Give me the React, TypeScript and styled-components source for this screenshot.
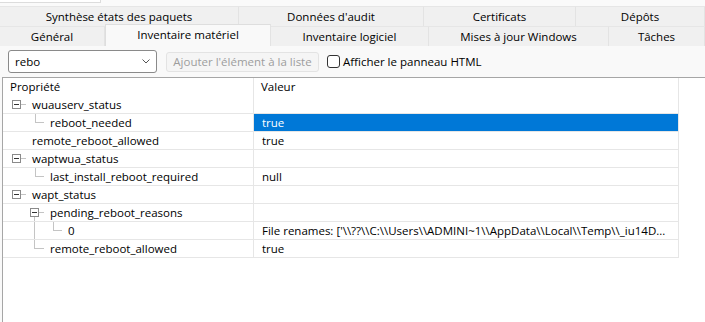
import React from "react";
import styled, { createGlobalStyle } from "styled-components";

const font = `"Open Sans", "Noto Sans", sans-serif`;
const line = "#e6e6e6";
const treeLine = "#c4c4c4";

const GlobalStyle = createGlobalStyle`
  html, body {
    margin: 0;
    padding: 0;
    background: #f9f9f9;
  }
  body {
    font-family: ${font};
    font-size: 11.5px;
    color: #000;
    width: 705px;
    height: 322px;
    overflow: hidden;
  }
`;

const topTabs = [
  { label: "Synthèse états des paquets", width: 239 },
  { label: "Données d'audit", width: 185 },
  { label: "Certificats", width: 152 },
  { label: "Dépôts", width: 129 }
];

const bottomTabs = [
  { label: "Général", width: 105 },
  { label: "Inventaire matériel", width: 166, active: true },
  { label: "Inventaire logiciel", width: 158 },
  { label: "Mises à jour Windows", width: 180 },
  { label: "Tâches", width: 96 }
];

type Glyph = "box" | "child" | "subbox" | "zero" | "last" | "none";

const rows: {
  name: string;
  value?: string;
  indent: number;
  glyph: Glyph;
  selected?: boolean;
}[] = [
  { name: "wuauserv_status", indent: 29, glyph: "box" },
  { name: "reboot_needed", value: "true", indent: 47, glyph: "child", selected: true },
  { name: "remote_reboot_allowed", value: "true", indent: 29, glyph: "none" },
  { name: "waptwua_status", indent: 29, glyph: "box" },
  { name: "last_install_reboot_required", value: "null", indent: 47, glyph: "child" },
  { name: "wapt_status", indent: 29, glyph: "box" },
  { name: "pending_reboot_reasons", indent: 47, glyph: "subbox" },
  {
    name: "0",
    value: "File renames: ['\\\\??\\\\C:\\\\Users\\\\ADMINI~1\\\\AppData\\\\Local\\\\Temp\\\\_iu14D...",
    indent: 65,
    glyph: "zero"
  },
  { name: "remote_reboot_allowed", value: "true", indent: 47, glyph: "last" }
];

function Minus({ x }: { x: number }) {
  return (
    <g>
      <rect x={x + 0.5} y={4.5} width={8} height={8} fill="#fff" stroke="#8a8a8a" />
      <line x1={x + 2} y1={8.5} x2={x + 7} y2={8.5} stroke="#333" />
    </g>
  );
}

function TreeGlyph({ glyph }: { glyph: Glyph }) {
  return (
    <GlyphSvg width={70} height={17} viewBox="0 0 70 17">
      {glyph === "box" && (
        <>
          <line x1={18} y1={8.5} x2={23} y2={8.5} stroke={treeLine} />
          <Minus x={9} />
        </>
      )}
      {glyph === "child" && (
        <>
          <line x1={32.5} y1={0} x2={32.5} y2={9} stroke={treeLine} />
          <line x1={32.5} y1={8.5} x2={41} y2={8.5} stroke={treeLine} />
        </>
      )}
      {glyph === "subbox" && (
        <>
          <line x1={35} y1={8.5} x2={41} y2={8.5} stroke={treeLine} />
          <line x1={31.5} y1={13} x2={31.5} y2={17} stroke={treeLine} />
          <Minus x={27} />
        </>
      )}
      {glyph === "zero" && (
        <>
          <line x1={31.5} y1={0} x2={31.5} y2={17} stroke={treeLine} />
          <line x1={50.5} y1={0} x2={50.5} y2={9} stroke={treeLine} />
          <line x1={50.5} y1={8.5} x2={59} y2={8.5} stroke={treeLine} />
        </>
      )}
      {glyph === "last" && (
        <>
          <line x1={31.5} y1={0} x2={31.5} y2={9} stroke={treeLine} />
          <line x1={31.5} y1={8.5} x2={41} y2={8.5} stroke={treeLine} />
        </>
      )}
    </GlyphSvg>
  );
}

export default function App() {
  return (
    <Page>
      <GlobalStyle />
      <TopStrip>
        <StripBox />
      </TopStrip>
      <TabRow>
        {topTabs.map(t => (
          <Tab key={t.label} style={{ width: t.width }}>
            {t.label}
          </Tab>
        ))}
      </TabRow>
      <TabRow $lower>
        {bottomTabs.map(t => (
          <Tab key={t.label} $active={t.active} style={{ width: t.width }}>
            {t.label}
          </Tab>
        ))}
      </TabRow>
      <Toolbar>
        <Combo>
          <span>rebo</span>
          <svg width="8" height="5" viewBox="0 0 8 5">
            <polyline points="0.5,0.5 4,4 7.5,0.5" fill="none" stroke="#555" strokeWidth="1" />
          </svg>
        </Combo>
        <DisabledButton>Ajouter l'élément à la liste</DisabledButton>
        <CheckLabel>
          <CheckBox />
          Afficher le panneau HTML
        </CheckLabel>
      </Toolbar>
      <Panel>
        <Grid>
          <HeaderRow>
            <NameCell>
              <HeaderText>Propriété</HeaderText>
            </NameCell>
            <ValueCell>
              <HeaderText>Valeur</HeaderText>
            </ValueCell>
          </HeaderRow>
          {rows.map((r, i) => (
            <Row key={i}>
              <NameCell>
                <TreeGlyph glyph={r.glyph} />
                <NameText style={{ left: r.indent }}>{r.name}</NameText>
              </NameCell>
              <ValueCell $selected={r.selected}>
                {r.value && <ValueText>{r.value}</ValueText>}
              </ValueCell>
            </Row>
          ))}
        </Grid>
      </Panel>
    </Page>
  );
}

const Page = styled.div`
  width: 705px;
  height: 322px;
  display: flex;
  flex-direction: column;
  background: #f9f9f9;
`;

const TopStrip = styled.div`
  height: 6px;
  background: #fafafa;
`;

const StripBox = styled.div`
  width: 100px;
  height: 2px;
  border-bottom: 1px solid #dcdcdc;
  border-right: 1px solid #dcdcdc;
  background: #fff;
`;

const TabRow = styled.div<{ $lower?: boolean }>`
  display: flex;
  height: 20px;
  align-items: flex-end;
  background: #f0f0f0;
  ${p =>
    p.$lower
      ? `
    height: 22px;
    margin-top: -2px;
  `
      : ``}
`;

const Tab = styled.div<{ $active?: boolean }>`
  box-sizing: border-box;
  height: ${p => (p.$active ? 22 : 20)}px;
  display: flex;
  align-items: center;
  justify-content: center;
  padding-bottom: ${p => (p.$active ? 2 : 0)}px;
  background: ${p => (p.$active ? "#f9f9f9" : "#f0f0f0")};
  border-top: 1px solid ${p => (p.$active ? "#dedede" : "#e6e6e6")};
  border-right: 1px solid #e3e3e3;
  ${p => (p.$active ? "border-left: 1px solid #dedede;" : "")}
  white-space: nowrap;
  color: #000;
  position: relative;
  z-index: ${p => (p.$active ? 1 : 0)};
`;

const Toolbar = styled.div`
  height: 31px;
  display: flex;
  align-items: center;
  padding-left: 8px;
  box-sizing: border-box;
  background: #f9f9f9;
`;

const Combo = styled.div`
  box-sizing: border-box;
  width: 149px;
  height: 23px;
  background: #fff;
  border: 1px solid #8a8a8a;
  border-radius: 3px;
  display: flex;
  align-items: center;
  justify-content: space-between;
  padding: 0 6px 0 6px;
`;

const DisabledButton = styled.div`
  box-sizing: border-box;
  margin-left: 9px;
  width: 153px;
  height: 20px;
  border: 1px solid #e3e3e3;
  border-radius: 3px;
  background: #f5f5f5;
  color: #9d9d9d;
  display: flex;
  align-items: center;
  justify-content: center;
  white-space: nowrap;
`;

const CheckLabel = styled.div`
  display: flex;
  align-items: center;
  margin-left: 8px;
  white-space: nowrap;
`;

const CheckBox = styled.div`
  box-sizing: border-box;
  width: 13px;
  height: 13px;
  border: 1px solid #333;
  border-radius: 3px;
  background: #fff;
  margin-right: 3px;
`;

const Panel = styled.div`
  flex: 1;
  margin-left: 2px;
  border-top: 1px solid #a6a6a6;
  border-left: 1px solid #a6a6a6;
  background: #fff;
`;

const Grid = styled.div`
  width: 676px;
`;

const HeaderRow = styled.div`
  display: flex;
  height: 18px;
`;

const Row = styled.div`
  display: flex;
  height: 18px;
  box-sizing: border-box;
  border-bottom: 1px solid ${line};
`;

const NameCell = styled.div`
  position: relative;
  width: 250px;
  flex-shrink: 0;
  border-right: 1px solid ${line};
  overflow: hidden;
`;

const ValueCell = styled.div<{ $selected?: boolean }>`
  flex: 1;
  min-width: 0;
  border-right: 1px solid ${line};
  background: ${p => (p.$selected ? "#0078d7" : "transparent")};
  color: ${p => (p.$selected ? "#fff" : "#000")};
  display: flex;
  align-items: center;
  overflow: hidden;
`;

const HeaderText = styled.span`
  display: block;
  line-height: 18px;
  padding-left: 7px;
  white-space: nowrap;
`;

const GlyphSvg = styled.svg`
  display: block;
`;

const NameText = styled.span`
  position: absolute;
  top: 0;
  line-height: 17px;
  white-space: nowrap;
`;

const ValueText = styled.span`
  padding-left: 8px;
  line-height: 17px;
  white-space: nowrap;
`;
